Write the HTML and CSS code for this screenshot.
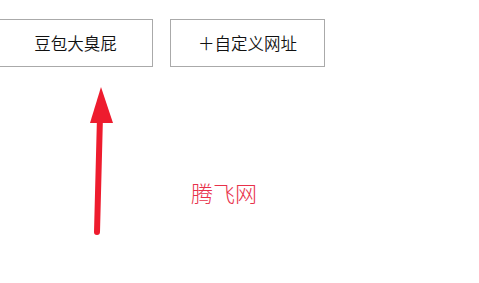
FILE: index.html
```html
<!DOCTYPE html>
<html lang="zh-CN">
<head>
    <meta charset="UTF-8">
    <meta name="viewport" content="width=device-width, initial-scale=1.0">
    <title>腾飞网</title>
    <link rel="stylesheet" href="styles.css">
</head>
<body>
    <div class="toolbar">
        <button class="site-btn first">豆包大臭屁</button>
        <button class="site-btn">＋自定义网址</button>
    </div>
    <div class="stage">
        <svg class="arrow" width="40" height="160" viewBox="0 0 40 160">
            <path d="M18 34 L15 150" stroke="#ee1c2e" stroke-width="6" stroke-linecap="round" fill="none"/>
            <polygon points="19,5 8,41 31,41" fill="#ee1c2e"/>
        </svg>
        <div class="brand">腾飞网</div>
    </div>
</body>
</html>
```

FILE: styles.css
```css
body {
    margin: 0;
    background: #fff;
    font-family: "Noto Sans CJK SC", "Noto Sans", sans-serif;
    overflow: hidden;
}
.toolbar {
    display: flex;
    gap: 17px;
    padding-top: 19px;
}
.site-btn {
    width: 155px;
    height: 48px;
    background: #fff;
    border: 1px solid #aaa;
    font-family: inherit;
    font-size: 16.5px;
    font-weight: 350;
    color: #111;
    padding: 0;
    cursor: pointer;
}
.site-btn.first {
    margin-left: -2px;
}
.stage {
    position: relative;
    height: 217px;
}
.arrow {
    position: absolute;
    left: 82px;
    top: 15px;
}
.brand {
    padding: 110px 0 0 191px;
    font-size: 22px;
    font-weight: 300;
    color: #e8314a;
    line-height: 30px;
}
```
